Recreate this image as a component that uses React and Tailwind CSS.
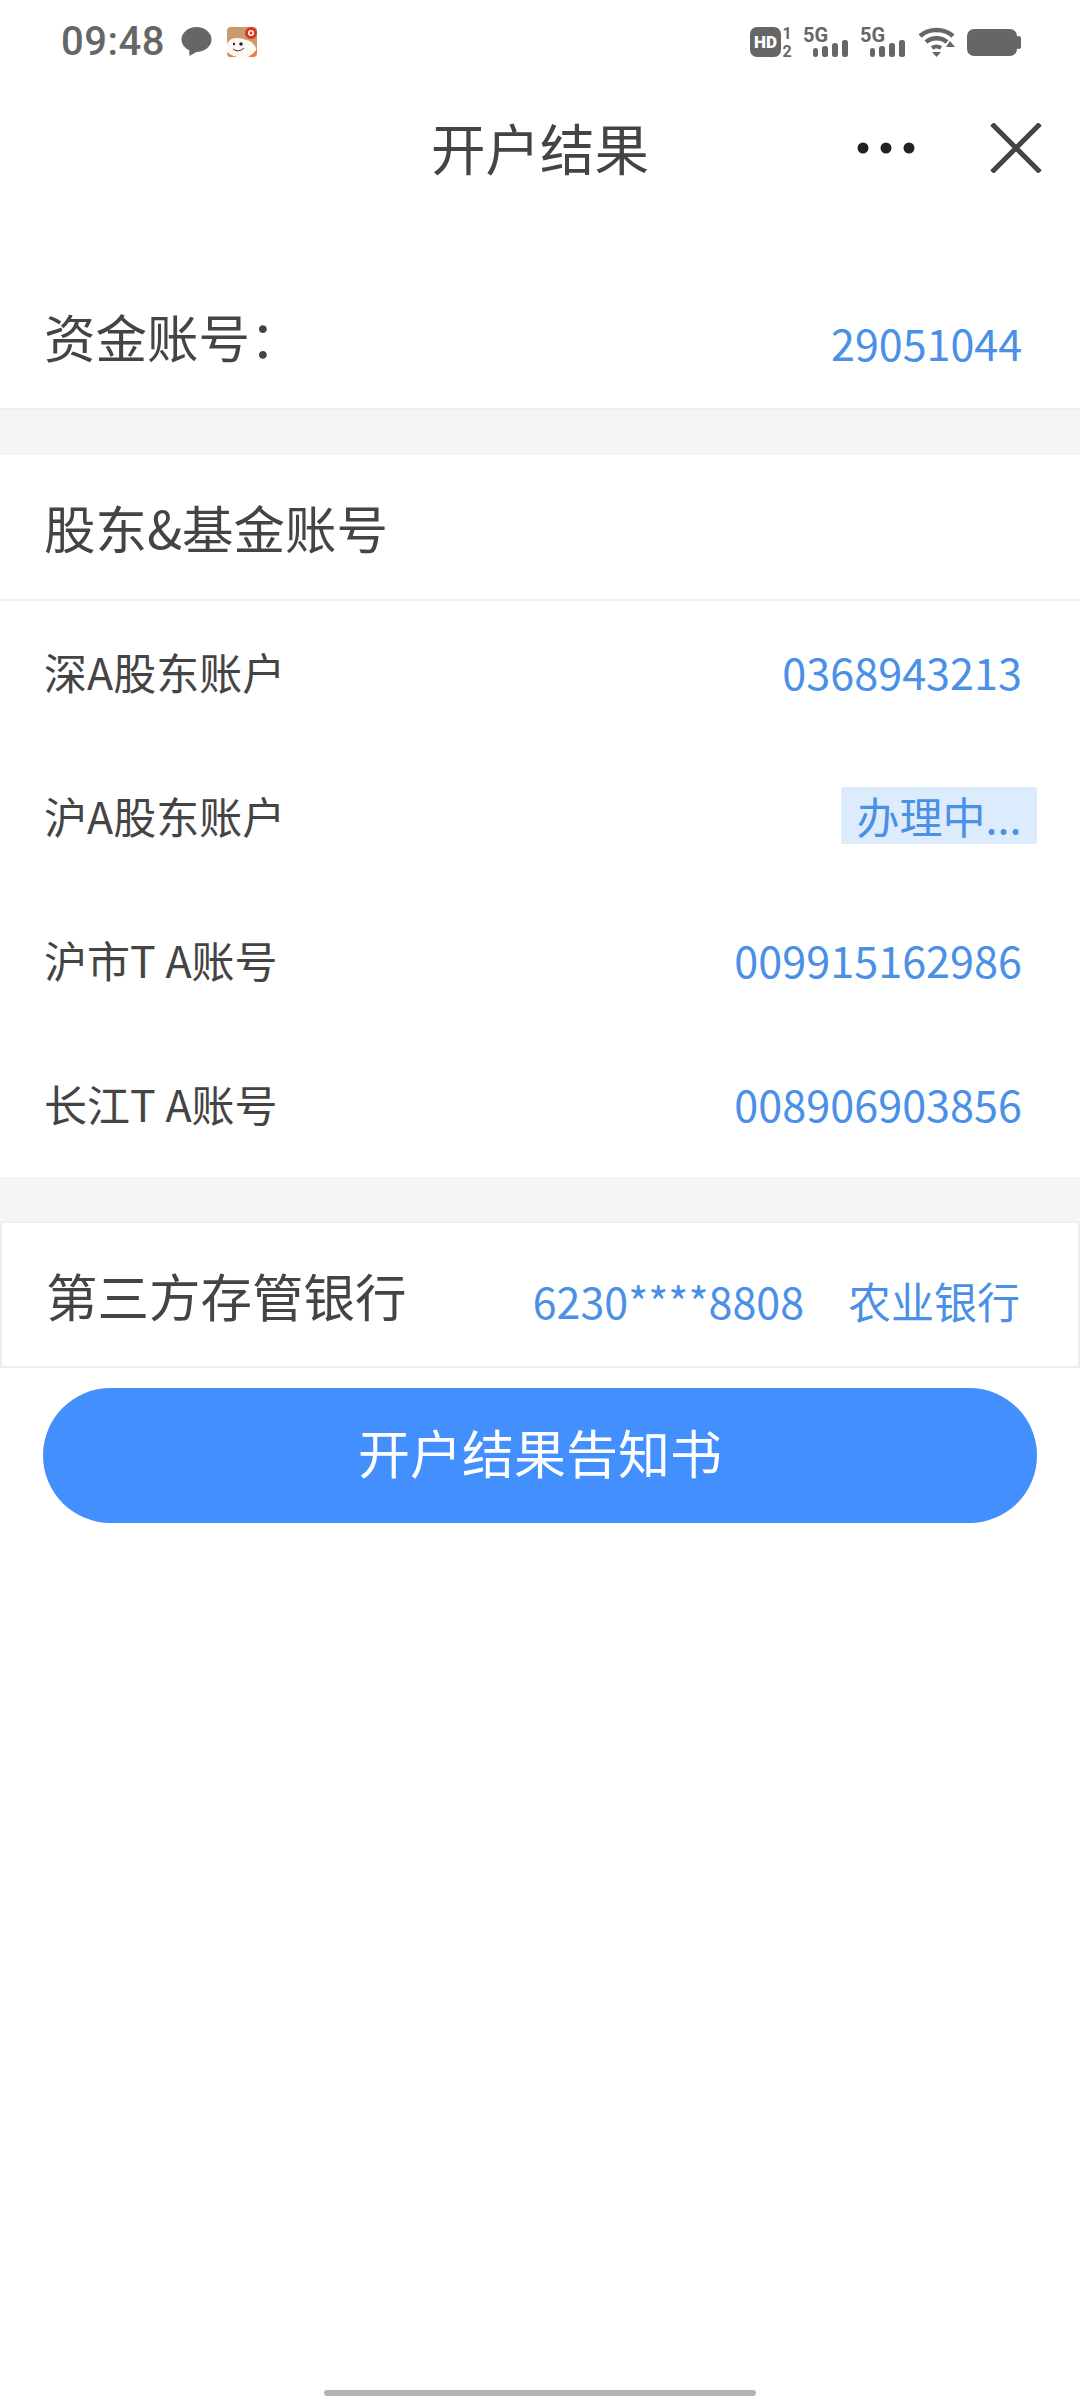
const CJK = { fontFamily: '"Noto Sans CJK SC", "Noto Sans", sans-serif' };

const accounts = [
  { label: "深A股东账户", value: "0368943213" },
  { label: "沪A股东账户", pending: true },
  { label: "沪市T A账号", value: "009915162986" },
  { label: "长江T A账号", value: "008906903856" },
];

const Signal = () => (
  <svg width="45" height="30" viewBox="0 0 45 30" className="overflow-visible">
    <text x="0" y="15" fontSize="20" fontWeight="700" fill="#666" fontFamily="Roboto, sans-serif">5G</text>
    <rect x="10" y="21" width="5" height="9" rx="2.5" fill="#666" />
    <rect x="19" y="19" width="6" height="11" rx="2.5" fill="#666" />
    <rect x="29" y="16" width="6" height="14" rx="2.5" fill="#666" />
    <rect x="39" y="13" width="6" height="17" rx="2.5" fill="#666" />
  </svg>
);

const StatusBar = () => (
  <div className="flex h-[84px] items-center justify-between pl-[61px] pr-[59px] text-[#666]">
    <div className="flex items-center">
      <span className="text-[40px] leading-none font-medium tracking-[0.5px]" style={{ fontFamily: "Roboto, sans-serif" }}>
        09:48
      </span>
      <svg width="31" height="30" viewBox="0 0 31 30" className="ml-[16px]">
        <ellipse cx="15.5" cy="12.5" rx="15" ry="12.5" fill="#666" />
        <path d="M8 20 L8.5 29 L17 24 Z" fill="#666" />
      </svg>
      <svg width="30" height="30" viewBox="0 0 30 30" className="ml-[15px]">
        <rect width="30" height="30" rx="4" fill="#c99b6c" />
        <path d="M0 17 C3 10 12 10 19 13 C25 13 30 20 30 26 C30 29 28 30 26 30 H4 C1 30 0 28 0 25 Z" fill="#fff8f2" />
        <path d="M0 25 C4 29 8 29 10 30 H4 C1 30 0 28 0 25 Z M21 30 C24 28 27 26 30 22 V26 C30 29 28 30 26 30 Z" fill="#ee7d3e" />
        <circle cx="24" cy="6" r="4.5" fill="#fff" stroke="#e0331c" strokeWidth="3" />
        <circle cx="24" cy="6" r="1.4" fill="#e0331c" />
        <circle cx="7" cy="17" r="1.2" fill="#222" />
        <circle cx="14" cy="17" r="1.8" fill="#222" />
        <path d="M6 22 C10 25 14 24 17 21" fill="none" stroke="#333" strokeWidth="1" />
      </svg>
    </div>
    <div className="flex items-center">
      <svg width="43" height="30" viewBox="0 0 43 30" className="overflow-visible">
        <rect width="31" height="30" rx="7" fill="#666" />
        <text x="15.5" y="21" textAnchor="middle" fontSize="17" fontWeight="900" fill="#fff" fontFamily="Roboto, sans-serif">HD</text>
        <text x="37" y="12" textAnchor="middle" fontSize="16" fontWeight="700" fill="#666" fontFamily="Roboto, sans-serif">1</text>
        <text x="37" y="30" textAnchor="middle" fontSize="16" fontWeight="700" fill="#666" fontFamily="Roboto, sans-serif">2</text>
      </svg>
      <div className="ml-[10px]"><Signal /></div>
      <div className="ml-[12px]"><Signal /></div>
      <svg width="38" height="30" viewBox="0 0 38 30" className="ml-[13px]">
        <path d="M2 9 C11 1 26 1 35 9" fill="none" stroke="#666" strokeWidth="4.5" />
        <path d="M8 15 C14 10 23 10 29 15" fill="none" stroke="#666" strokeWidth="4.5" />
        <path d="M14 21 C17 19 20 19 23 21" fill="none" stroke="#666" strokeWidth="4" />
        <path d="M14 25 H23 L18.5 30 Z" fill="#666" />
        <path d="M32 14 L37 20 H28 Z" fill="#666" />
      </svg>
      <svg width="54" height="27" viewBox="0 0 54 27" className="ml-[11px]">
        <rect width="50" height="27" rx="7" fill="#666" />
        <rect x="49" y="7" width="5" height="13" rx="2.5" fill="#666" />
      </svg>
    </div>
  </div>
);

const NavBar = () => (
  <div className="relative flex h-[132px] items-center justify-center">
    <h1 className="mb-[6px] text-[54.5px] leading-none font-normal text-[#444]">开户结果</h1>
    <svg width="58" height="14" viewBox="0 0 58 14" className="absolute left-[857px] top-[57px]">
      <circle cx="6" cy="7" r="5.5" fill="#222" />
      <circle cx="29" cy="7" r="5.5" fill="#222" />
      <circle cx="52" cy="7" r="5.5" fill="#222" />
    </svg>
    <svg width="52" height="50" viewBox="0 0 52 50" className="absolute left-[990px] top-[39px]">
      <path d="M2 1 L50 49 M50 1 L2 49" fill="none" stroke="#444" strokeWidth="5" />
    </svg>
  </div>
);

export default function App() {
  return (
    <div className="flex h-[2400px] w-[1080px] flex-col overflow-hidden bg-white" style={CJK}>
      <StatusBar />
      <NavBar />

      <div className="flex h-[194px] items-end justify-between border-b-2 border-[#eeeeee] pr-[58px] pb-[36px] pl-[44px]">
        <span className="mb-[6px] text-[51.5px] leading-[60px] text-[#444]">资金账号：</span>
        <span className="text-[43px] leading-[60px] text-[#4a90e6]">29051044</span>
      </div>

      <div className="h-[45px] bg-[#f5f5f5]" />

      <div className="flex h-[146px] items-center border-b-2 border-[#eeeeee] pl-[44px] text-[51.5px] text-[#444]">
        股东&amp;基金账号
      </div>

      <div className="flex flex-col">
        {accounts.map((a) => (
          <div key={a.label} className="flex h-[144px] items-center justify-between pb-[4px] pl-[44px] pr-[58px]">
            <span className="text-[43px] text-[#444]">{a.label}</span>
            {a.pending ? (
              <span className="-mr-[15px] flex h-[57px] w-[196px] items-center justify-center rounded-[2px] bg-[#dcecfd] text-[43px] text-[#4a90e6]">
                办理中...
              </span>
            ) : (
              <span className="text-[43.2px] text-[#4a90e6]">{a.value}</span>
            )}
          </div>
        ))}
      </div>

      <div className="h-[44px] bg-[#f5f5f5]" />

      <div className="flex h-[147px] items-center justify-between border-2 border-[#eeeeee] pl-[44px] pr-[58px]">
        <span className="text-[51.5px] text-[#444]">第三方存管银行</span>
        <div className="mt-[12px] flex items-center gap-[44px] text-[43px] text-[#4a90e6]">
          <span>6230****8808</span>
          <span>农业银行</span>
        </div>
      </div>

      <button className="mx-[43px] mt-[20px] flex h-[135px] items-center justify-center rounded-full bg-[#438ffe] pb-[7px] text-[52px] text-white">
        开户结果告知书
      </button>

      <div className="mt-auto mb-[4px] h-[6px] w-[432px] self-center rounded-full bg-[#b4b4b4]" />
    </div>
  );
}
